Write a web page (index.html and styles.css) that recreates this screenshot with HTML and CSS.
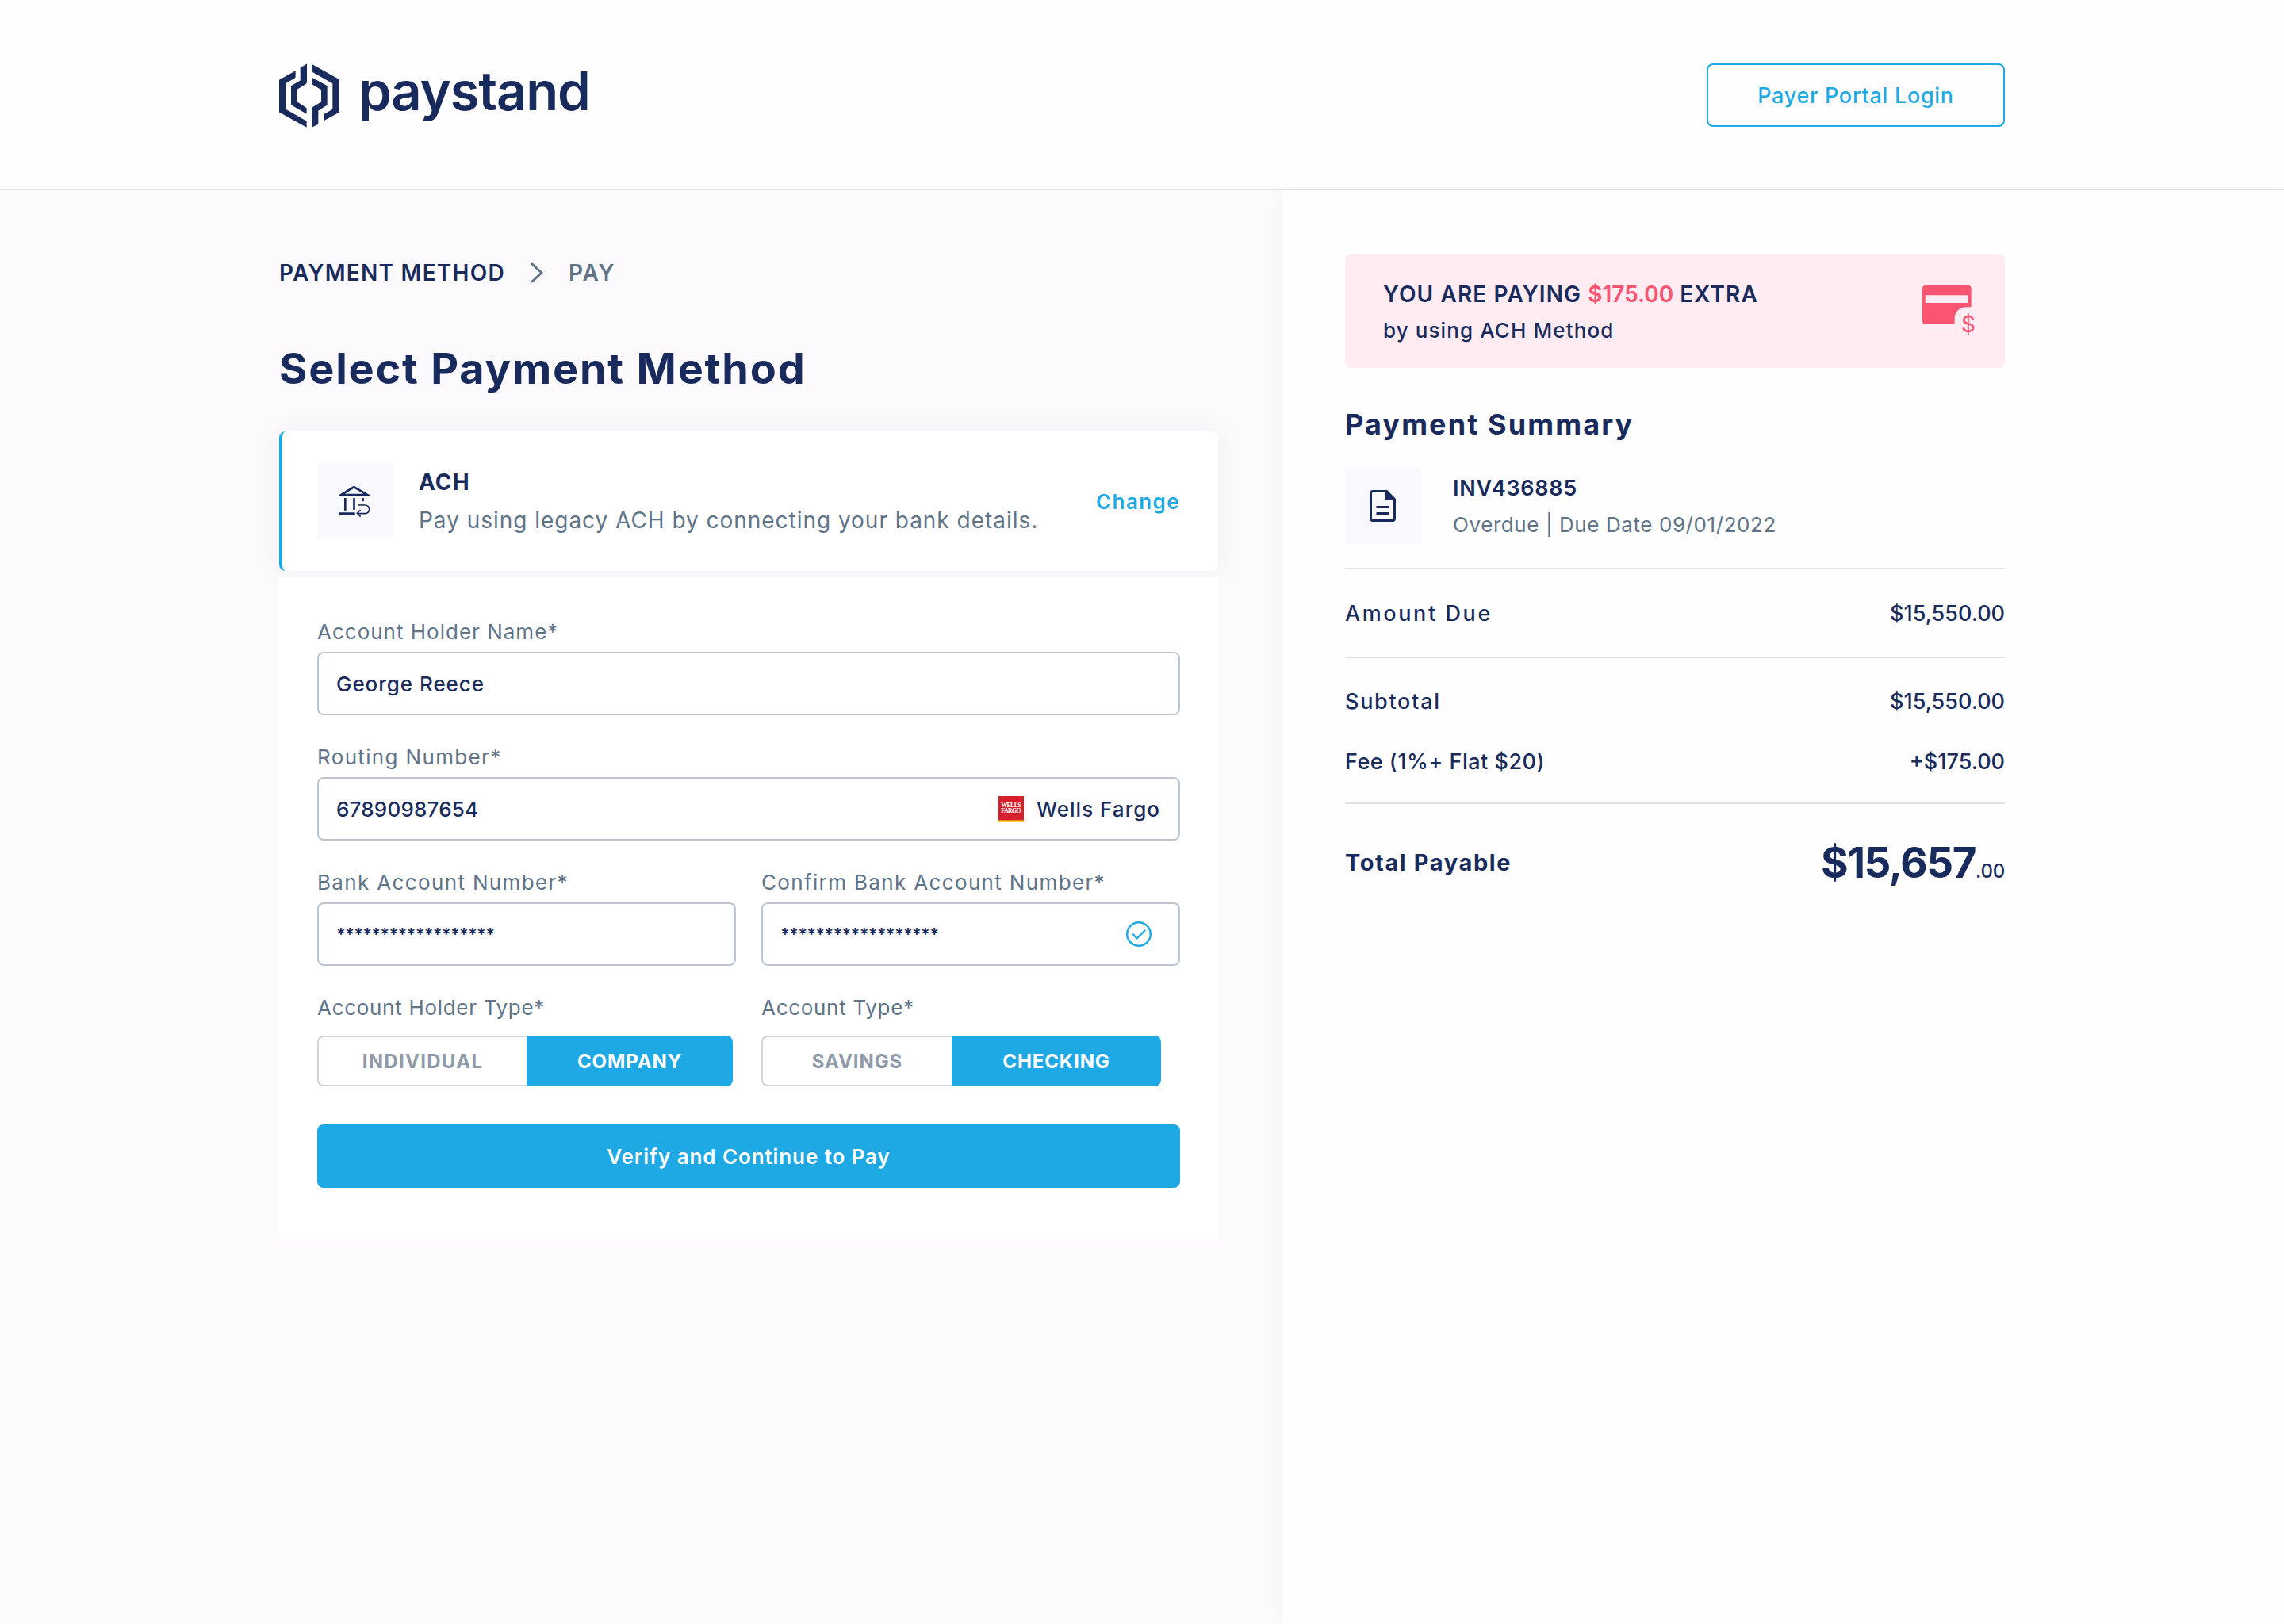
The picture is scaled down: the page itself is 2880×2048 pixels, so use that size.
FILE: index.html
```html
<!DOCTYPE html>
<html lang="en">
<head>
    <meta charset="UTF-8">
    <meta name="viewport" content="width=device-width, initial-scale=1.0">
    <title>Paystand - Select Payment Method</title>
    <link rel="stylesheet" href="styles.css">
</head>
<body>
<header class="header">
    <a class="logo" href="#">
        <svg class="logo-mark" viewBox="66 58 228 242" fill="#192b5c">
            <path d="M128 85V108Q128 112 122 115L90 133V230L170 276V300L66 242V120Z"/>
            <path d="M171 59V127Q171 133 165 137L134 156V202L170 226V249L111 214V142L146 122V73Z"/>
            <path d="M189 60L294 118V242L234 275V254Q235 249 240 247L268 231V133L195 92Q189 88 189 82Z"/>
            <path d="M189 110L248 142V215L214 236V288L189 300V230Q190 224 194 222L225 203V157L195 139Q189 135 189 130Z"/>
        </svg>
        <span class="logo-text">paystand</span>
    </a>
    <button class="login-button">Payer Portal Login</button>
</header>

<div class="page">
    <main class="content">
        <nav class="breadcrumb">
            <span class="active">PAYMENT METHOD</span>
            <svg class="chevron" viewBox="0 0 16 26" fill="none" stroke="#5f7488" stroke-width="3" stroke-linecap="round" stroke-linejoin="round">
                <path d="M2 2L14 13L2 24"/>
            </svg>
            <span class="next">PAY</span>
        </nav>
        <h1 class="title">Select Payment Method</h1>

        <section class="method">
            <div class="icon-box">
                <svg class="bank-icon" viewBox="294 272 120 126" fill="none" stroke="#192b5c" stroke-width="8">
                    <path d="M300 311H400L349 281Z"/>
                    <path d="M316 323V370M349.5 323V368M382.5 323V336M294 382H353"/>
                    <path stroke-width="5" d="M366 350H391a16 16 0 0 1 0 32H362M374 368L361 381L374 394"/>
                </svg>
            </div>
            <div class="method-info">
                <div class="method-name">ACH</div>
                <div class="method-text">Pay using legacy ACH by connecting your bank details.</div>
            </div>
            <a class="change" href="#">Change</a>
        </section>

        <form class="form">
            <div class="field wide">
                <label class="label" for="holder">Account Holder Name*</label>
                <div class="box"><input class="input name" id="holder" type="text" value="George Reece"></div>
            </div>
            <div class="field wide">
                <label class="label loose" for="routing">Routing Number*</label>
                <div class="box">
                    <input class="input" id="routing" type="text" value="67890987654">
                    <svg class="bank-logo" viewBox="0 0 96 96">
                        <rect width="96" height="96" fill="#d71e2b"/>
                        <rect y="91" width="96" height="5" fill="#ffc726"/>
                        <text class="bank-logo-text" x="10" y="41" textLength="76">WELLS</text>
                        <text class="bank-logo-text" x="10" y="64" textLength="76">FARGO</text>
                    </svg>
                    <span class="bank-name">Wells Fargo</span>
                </div>
            </div>
            <div class="field">
                <label class="label loose" for="account">Bank Account Number*</label>
                <div class="box"><input class="input stars" id="account" type="text" value="******************"></div>
            </div>
            <div class="field">
                <label class="label loose" for="confirm">Confirm Bank Account Number*</label>
                <div class="box">
                    <input class="input stars" id="confirm" type="text" value="******************">
                    <svg class="check-icon" viewBox="0 0 32 32" fill="none" stroke="#1ea9e5" stroke-width="2.4" stroke-linecap="round" stroke-linejoin="round">
                        <circle cx="16" cy="16" r="14.8"/>
                        <path d="M9 16.5L13.5 21.5L23.5 11.5"/>
                    </svg>
                </div>
            </div>
            <div class="field">
                <span class="label tight">Account Holder Type*</span>
                <div class="toggle holder-type">
                    <button class="option individual" type="button">INDIVIDUAL</button>
                    <button class="option selected" type="button">COMPANY</button>
                </div>
            </div>
            <div class="field">
                <span class="label tight">Account Type*</span>
                <div class="toggle account-type">
                    <button class="option" type="button">SAVINGS</button>
                    <button class="option selected" type="button">CHECKING</button>
                </div>
            </div>
            <button class="submit" type="button">Verify and Continue to Pay</button>
        </form>
    </main>

    <aside class="sidebar">
        <div class="notice">
            <div class="notice-text">
                <div class="notice-title">YOU ARE PAYING <span class="extra">$175.00</span> EXTRA</div>
                <div class="notice-sub">by using ACH Method</div>
            </div>
            <svg class="card-icon" viewBox="132 120 210 210" fill="#f95572">
                <path fill-rule="evenodd" d="M144 120H305a12 12 0 0 1 12 12V202H300C272 202 254 220 254 245V266H144a12 12 0 0 1-12-12V132a12 12 0 0 1 12-12ZM143 157V186H306V157Z"/>
                <text class="card-icon-sign" x="306" y="297" text-anchor="middle">$</text>
            </svg>
        </div>

        <h2 class="summary-title">Payment Summary</h2>
        <div class="invoice">
            <div class="icon-box">
                <svg class="doc-icon" viewBox="0 0 34 40" fill="none" stroke="#192b5c" stroke-width="3">
                    <path d="M4 1.5H21.5L31.5 11.5V36a2.5 2.5 0 0 1-2.5 2.5H4A2.5 2.5 0 0 1 1.5 36V4A2.5 2.5 0 0 1 4 1.5Z"/>
                    <path fill="#192b5c" stroke="none" d="M20 1V12.5H33Z"/>
                    <path d="M8.5 21.5H25M8.5 29.5H25"/>
                </svg>
            </div>
            <div class="invoice-info">
                <div class="invoice-number">INV436885</div>
                <div class="invoice-due">Overdue | Due Date 09/01/2022</div>
            </div>
        </div>
        <div class="rows">
            <div class="row tall"><span class="amount-name">Amount Due</span><span>$15,550.00</span></div>
        </div>
        <div class="rows fees">
            <div class="row"><span class="subtotal-name">Subtotal</span><span>$15,550.00</span></div>
            <div class="row"><span class="fee-name">Fee (1%+ Flat $20)</span><span>+$175.00</span></div>
        </div>
        <div class="total">
            <span class="total-name">Total Payable</span>
            <span class="total-value"><span class="dollars">$15,657</span><span class="cents">.00</span></span>
        </div>
    </aside>
</div>
</body>
</html>
```
FILE: styles.css
```css
* {
    box-sizing: border-box;
}
body {
    margin: 0;
    font-family: Inter, "Open Sans", sans-serif;
    font-size: 26px;
    color: #192b5c;
    background-color: #fefefe;
}
h1, h2 {
    margin: 0;
}
a {
    text-decoration: none;
}
button, input {
    font-family: inherit;
    cursor: pointer;
}

/* header */
.header {
    display: flex;
    justify-content: space-between;
    align-items: center;
    height: 240px;
    padding: 2px 352px 0;
    border-bottom: 2px solid #e1e6ed;
}
.logo {
    display: flex;
    align-items: center;
    gap: 24px;
    color: #192b5c;
}
.logo-mark {
    width: 76px;
    height: 81px;
}
.logo-text {
    font-size: 67px;
    font-weight: 600;
    line-height: 80px;
    letter-spacing: -1.2px;
    padding-bottom: 11px;
}
.login-button {
    width: 376px;
    height: 80px;
    border: 2px solid #1ea9e5;
    border-radius: 8px;
    background-color: transparent;
    color: #1ea9e5;
    font-size: 27px;
    font-weight: 500;
    letter-spacing: 0.7px;
}

.page {
    display: flex;
    height: 1808px;
}
.content {
    width: 1616px;
    padding: 84px 80px 0 352px;
    background-color: #fcfafd;
}

/* breadcrumb */
.breadcrumb {
    display: flex;
    align-items: center;
    height: 40px;
    font-size: 28px;
    font-weight: 600;
}
.active {
    letter-spacing: 1.25px;
}
.chevron {
    width: 16px;
    height: 26px;
    margin: 0 32px;
}
.next {
    color: #5f7488;
    letter-spacing: 1.8px;
}
.title {
    margin: 66px 0 44px;
    font-size: 54px;
    line-height: 70px;
    letter-spacing: 1.8px;
}

/* selected method */
.method {
    display: flex;
    align-items: center;
    height: 176px;
    padding: 0 48px 0 44px;
    border-left: 4px solid #1ea9e5;
    border-radius: 8px;
    background-color: #fff;
    box-shadow: 0 0 40px rgba(25, 25, 60, 0.05);
}
.icon-box {
    display: flex;
    justify-content: center;
    align-items: center;
    width: 96px;
    height: 96px;
    background-color: #f9f8fc;
}
.bank-icon {
    width: 40px;
    height: 42px;
}
.method-info {
    flex: 1;
    padding-left: 32px;
    line-height: 48px;
    font-size: 28px;
}
.method-name {
    font-weight: 700;
    letter-spacing: 1.1px;
}
.method-text {
    color: #5f7488;
    letter-spacing: 0.97px;
    white-space: nowrap;
}
.change {
    color: #1ea9e5;
    font-weight: 600;
    letter-spacing: 1.4px;
}

/* form */
.form {
    position: relative;
    display: grid;
    grid-template-columns: 528px 528px;
    column-gap: 32px;
    row-gap: 28px;
    margin-top: 8px;
    padding: 44px 48px 66px;
    background-color: #fff;
}
.wide {
    grid-column: 1 / 3;
}
.label {
    display: block;
    color: #5f7488;
    font-size: 26px;
    line-height: 50px;
    letter-spacing: 1px;
}
.loose {
    letter-spacing: 1.35px;
}
.tight {
    letter-spacing: 0.7px;
}
.box {
    display: flex;
    align-items: center;
    height: 80px;
    padding: 0 22px;
    border: 2px solid #bdc5d3;
    border-radius: 8px;
}
.input {
    flex: 1;
    min-width: 0;
    padding: 0;
    border: none;
    outline: none;
    background: none;
    color: #192b5c;
    font-size: 26px;
    font-weight: 450;
    letter-spacing: 0.2px;
}
.name {
    letter-spacing: 0.95px;
}
.stars {
    font-size: 22px;
    font-weight: 600;
    letter-spacing: -0.8px;
}
.bank-logo {
    width: 32px;
    height: 32px;
    margin-right: 16px;
}
.bank-logo-text {
    fill: #fff;
    font-family: "Liberation Serif", serif;
    font-size: 24px;
    font-weight: 700;
}
.bank-name {
    margin-right: 1px;
    font-weight: 450;
    letter-spacing: 1px;
}
.check-icon {
    width: 32px;
    height: 32px;
    margin-right: 12px;
}
.toggle {
    display: flex;
    height: 64px;
    margin-top: 10px;
}
.holder-type {
    width: 524px;
}
.account-type {
    width: 504px;
}
.option {
    width: 240px;
    padding: 0;
    border: 2px solid #d0d4dd;
    border-right: none;
    border-radius: 8px 0 0 8px;
    background-color: #fff;
    color: #8f9bab;
    font-size: 24px;
    font-weight: 700;
    letter-spacing: 0.9px;
}
.individual {
    width: 264px;
    letter-spacing: 1.3px;
}
.selected {
    flex: 1;
    border: none;
    border-radius: 0 8px 8px 0;
    background-color: #1ea9e5;
    color: #fff;
}
.submit {
    grid-column: 1 / 3;
    height: 80px;
    margin-top: 20px;
    border: none;
    border-radius: 8px;
    background-color: #1ea9e5;
    color: #fff;
    font-size: 26px;
    font-weight: 600;
    letter-spacing: 0.9px;
}

/* sidebar */
.sidebar {
    flex: 1;
    padding: 80px 352px 0 80px;
    background-color: #fefefe;
    box-shadow: 0 0 24px rgba(25, 25, 60, 0.03);
}
.notice {
    display: flex;
    justify-content: space-between;
    height: 144px;
    padding: 28px 34px 0 48px;
    border-radius: 8px;
    background-color: #ffecf2;
    line-height: 46px;
}
.notice-title {
    font-size: 28px;
    font-weight: 600;
    letter-spacing: 1.1px;
}
.extra {
    color: #f95572;
    letter-spacing: 0;
}
.notice-sub {
    font-size: 26px;
    font-weight: 450;
    letter-spacing: 1.1px;
}
.card-icon {
    width: 70px;
    height: 70px;
    margin-top: 12px;
}
.card-icon-sign {
    font-size: 84px;
    line-height: 1;
}
.summary-title {
    margin: 46px 0 30px;
    font-size: 36px;
    line-height: 50px;
    letter-spacing: 2.1px;
}
.invoice {
    display: flex;
    align-items: center;
    padding-bottom: 30px;
    border-bottom: 2px solid #dde2e6;
}
.doc-icon {
    width: 34px;
    height: 40px;
}
.invoice-info {
    padding: 2px 0 0 40px;
    line-height: 46px;
}
.invoice-number {
    font-size: 27px;
    font-weight: 600;
    letter-spacing: 0.7px;
}
.invoice-due {
    color: #5f7488;
    letter-spacing: 0.58px;
}
.rows {
    border-bottom: 2px solid #dde2e6;
    font-size: 27px;
    font-weight: 450;
}
.row {
    display: flex;
    justify-content: space-between;
    line-height: 76px;
}
.tall {
    height: 110px;
    line-height: 112px;
}
.fees {
    padding: 17px 0 13px;
}
.amount-name {
    letter-spacing: 2.6px;
}
.subtotal-name {
    letter-spacing: 1.7px;
}
.fee-name {
    letter-spacing: 0.5px;
}
.total {
    display: flex;
    justify-content: space-between;
    line-height: 148px;
}
.total-name {
    font-size: 29px;
    font-weight: 700;
    letter-spacing: 1.6px;
}
.dollars {
    font-size: 53px;
    font-weight: 700;
    letter-spacing: -1.5px;
}
.cents {
    font-size: 24px;
    font-weight: 450;
    letter-spacing: -0.2px;
}
```
